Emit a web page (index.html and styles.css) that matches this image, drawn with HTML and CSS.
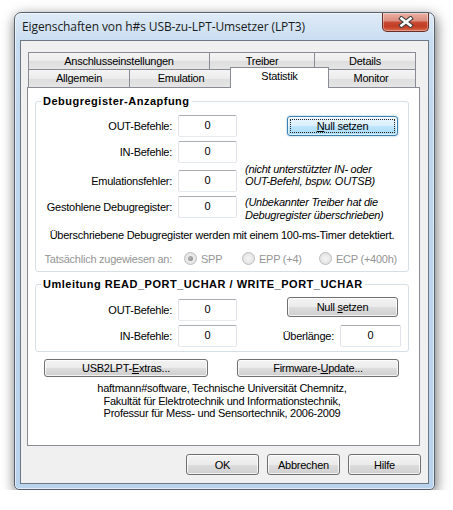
FILE: index.html
```html
<!DOCTYPE html>
<html lang="de">
<head>
<meta charset="utf-8">
<title>Eigenschaften</title>
<link rel="stylesheet" href="styles.css">
</head>
<body>
<div class="window">
  <div class="titlebar">
    <span class="title">Eigenschaften von h#s USB-zu-LPT-Umsetzer (LPT3)</span>
    <div class="close">
      <svg width="16" height="12" viewBox="0 0 16 12">
        <path d="M3.5 2.5 L12.5 9.5 M12.5 2.5 L3.5 9.5" stroke="#3d3d3d" stroke-width="4.6" stroke-linecap="square" fill="none"/>
        <path d="M3.5 2.5 L12.5 9.5 M12.5 2.5 L3.5 9.5" stroke="#ffffff" stroke-width="2.6" stroke-linecap="square" fill="none"/>
      </svg>
    </div>
  </div>
  <div class="client">
    <div class="tabs">
      <div class="tabrow row1">
        <div class="tab w-ansch">Anschlusseinstellungen</div>
        <div class="tab w-treiber">Treiber</div>
        <div class="tab w-details">Details</div>
      </div>
      <div class="tabrow row2">
        <div class="tab w-allg">Allgemein</div>
        <div class="tab w-emu">Emulation</div>
        <div class="tab active w-stat">Statistik</div>
        <div class="tab w-mon">Monitor</div>
      </div>
    </div>
    <div class="panel">
      <div class="group g1">
        <div class="gtitle">Debugregister-Anzapfung</div>
        <div class="frow r1">
          <span class="lbl">OUT-Befehle:</span>
          <span class="edit">0</span>
          <span class="btn focus nullbtn"><span class="focusrect"><span><u>N</u>ull setzen</span></span></span>
        </div>
        <div class="frow r2">
          <span class="lbl">IN-Befehle:</span>
          <span class="edit">0</span>
        </div>
        <div class="frow r3">
          <span class="lbl">Emulationsfehler:</span>
          <span class="edit">0</span>
          <span class="note note1">(nicht unterstützter IN- oder<br>OUT-Befehl, bspw. OUTSB)</span>
        </div>
        <div class="frow r4">
          <span class="lbl">Gestohlene Debugregister:</span>
          <span class="edit">0</span>
          <span class="note note2">(Unbekannter Treiber hat die<br>Debugregister überschrieben)</span>
        </div>
        <div class="info">Überschriebene Debugregister werden mit einem 100-ms-Timer detektiert.</div>
        <div class="radiorow">
          <span class="lbl grey">Tatsächlich zugewiesen an:</span>
          <span class="opt o-spp"><span class="radio checked"></span><span class="grey">SPP</span></span>
          <span class="opt o-epp"><span class="radio"></span><span class="grey">EPP (+4)</span></span>
          <span class="opt o-ecp"><span class="radio"></span><span class="grey">ECP (+400h)</span></span>
        </div>
      </div>
      <div class="group g2">
        <div class="gtitle">Umleitung READ_PORT_UCHAR / WRITE_PORT_UCHAR</div>
        <div class="frow q1">
          <span class="lbl">OUT-Befehle:</span>
          <span class="edit">0</span>
          <span class="btn nullbtn nb2"><span>Null <u>s</u>etzen</span></span>
        </div>
        <div class="frow q2">
          <span class="lbl">IN-Befehle:</span>
          <span class="edit">0</span>
          <span class="lbl2">Überlänge:</span>
          <span class="edit wide">0</span>
        </div>
      </div>
      <div class="extras">
        <span class="btn b-extras"><span>USB2LPT-<u>E</u>xtras...</span></span>
        <span class="btn b-fw"><span>Firmware-<u>U</u>pdate...</span></span>
      </div>
      <div class="credits">haftmann#software, Technische Universität Chemnitz,<br>Fakultät für Elektrotechnik und Informationstechnik,<br>Professur für Mess- und Sensortechnik, 2006-2009</div>
    </div>
    <div class="dlgbtns">
      <span class="btn dbtn">OK</span>
      <span class="btn dbtn">Abbrechen</span>
      <span class="btn dbtn">Hilfe</span>
    </div>
  </div>
</div>
</body>
</html>
```
FILE: styles.css
```css
* { box-sizing: border-box; }
body {
  margin: 0;
  background: #ffffff;
  font-family: "Liberation Sans", Arial, sans-serif;
  font-size: 11px;
  letter-spacing: -0.25px;
  color: #000;
}
.window {
  margin: 12px 0 0 14px;
  width: 421px;
  height: 478px;
  border: 1px solid #56626e;
  border-radius: 7px 7px 5px 5px;
  background: linear-gradient(#dfebf7, #c9ddf1 28px, #bed6ee 120px, #bad3ec);
  box-shadow: 1px 4px 13px rgba(0,0,0,0.6), inset 0 0 0 1px rgba(255,255,255,0.55);
  display: flex;
  flex-direction: column;
}
.titlebar {
  height: 27px;
  display: flex;
  align-items: flex-start;
}
.title {
  font-family: "Open Sans", "Noto Sans", sans-serif;
  font-size: 12px;
  letter-spacing: -0.1px;
  line-height: 28px;
  padding-left: 7px;
  color: #1a1a1a;
}
.close {
  margin-left: auto;
  margin-right: 5px;
  width: 47px;
  height: 19px;
  border: 1px solid #6b2e26;
  border-top: none;
  border-radius: 0 0 5px 5px;
  background: linear-gradient(#eab2a5, #dc8b7c 45%, #c94a33 50%, #c33d24 75%, #d76a4c);
  box-shadow: inset 0 0 0 1px rgba(255,255,255,0.35);
  display: flex;
  align-items: center;
  justify-content: center;
}
.close svg { display: block; }
.client {
  margin: 0 5px;
  height: 444px;
  border: 1px solid #6c7884;
  background: #f0f0f0;
  display: flex;
  flex-direction: column;
}
.tabs { margin: 11px 0 0 7px; }
.tabrow { display: flex; }
.tab {
  border: 1px solid #898c95;
  border-bottom: none;
  margin-left: -1px;
  background: linear-gradient(#f4f4f4, #ececec 50%, #dedede 51%, #e5e5e5);
  text-align: center;
  white-space: nowrap;
}
.tabrow .tab:first-child { margin-left: 0; }
.row1 .tab { height: 17px; line-height: 16px; }
.row2 .tab { height: 18px; line-height: 17px; }
.w-ansch { width: 182px; }
.w-treiber { width: 106px; }
.w-details { width: 102px; }
.w-allg { width: 102px; }
.w-emu { width: 104px; }
.w-mon { width: 90px; }
.row2 .tab.active {
  width: 99px;
  height: 21px;
  margin: -2px -2px -1px -3px;
  background: #ffffff;
  line-height: 17px;
  position: relative;
  z-index: 2;
}
.panel {
  margin-left: 6px;
  width: 393px;
  height: 359px;
  border: 1px solid #898c95;
  background: #ffffff;
  display: flex;
  flex-direction: column;
}
.group {
  margin-left: 7px;
  width: 374px;
  border: 1px solid #d5dfe5;
  border-radius: 3px;
}
.g1 { margin-top: 13px; padding-bottom: 6px; }
.g2 { margin-top: 12px; padding-bottom: 4px; }
.gtitle {
  font-weight: bold;
  letter-spacing: 0.5px;
  margin: -7px 0 0 5px;
  padding: 0 2px;
  background: #fff;
  line-height: 13px;
  width: fit-content;
}
.frow {
  display: flex;
  align-items: center;
  height: 22px;
}
.lbl {
  width: 136px;
  text-align: right;
  white-space: nowrap;
  flex: none;
}
.edit {
  margin-left: 6px;
  width: 59px;
  height: 22px;
  border: 1px solid #e2e3ea;
  border-top-color: #abadb3;
  border-bottom-color: #e3e9ef;
  border-radius: 2px;
  background: #fff;
  text-align: center;
  line-height: 18px;
  flex: none;
}
.edit.wide { width: 61px; margin: 0 7px 0 6px; }
.r1 { margin-top: 7px; }
.r2 { margin-top: 4px; }
.r3 { margin-top: 7px; }
.r4 { margin-top: 4px; }
.q1 { margin-top: 8px; }
.q2 { margin-top: 4px; }
.btn {
  border: 1px solid #707070;
  border-radius: 3px;
  background: linear-gradient(#f3f3f3, #ebebeb 50%, #dddddd 51%, #cfcfcf);
  box-shadow: inset 0 0 0 1px rgba(255,255,255,0.75);
  display: flex;
  align-items: center;
  justify-content: center;
  white-space: nowrap;
  flex: none;
}
.nullbtn {
  margin-left: 50px;
  width: 111px;
  height: 20px;
}
.nb2 { align-self: flex-start; margin-top: -2px; }
.btn.focus {
  border-color: #3c7fb1;
  background: linear-gradient(#eaf6fd, #d9f0fc 50%, #bee6fd 51%, #a7d9f5);
  box-shadow: inset 0 0 0 1px rgba(255,255,255,0.6), 0 0 2px rgba(60,127,177,0.6);
  padding: 2px;
}
.focusrect {
  width: 100%;
  height: 100%;
  border: 1px dotted #222;
  display: flex;
  align-items: center;
  justify-content: center;
}
.note {
  margin-left: 8px;
  font-style: italic;
  line-height: 12px;
  white-space: nowrap;
  align-self: flex-start;
}
.note1 { margin-top: -7px; }
.note2 { margin-top: 0; line-height: 12.5px; }
.info {
  margin-top: 11px;
  line-height: 13px;
  text-align: center;
}
.radiorow {
  margin-top: 10px;
  height: 13px;
  display: flex;
  align-items: center;
}
.grey { color: #959595; }
.opt {
  display: flex;
  align-items: center;
  flex: none;
}
.o-spp { margin-left: 12px; width: 58px; }
.o-epp { width: 77px; }
.radio {
  width: 13px;
  height: 13px;
  border-radius: 50%;
  border: 1px solid #bcbcbc;
  background: radial-gradient(circle at 50% 50%, #f4f4f4 0, #e6e6e6 60%, #dadada 100%);
  margin-right: 4px;
  display: flex;
  align-items: center;
  justify-content: center;
  flex: none;
}
.radio.checked::after {
  content: "";
  width: 5px;
  height: 5px;
  border-radius: 50%;
  background: radial-gradient(circle at 40% 40%, #b8b8b8, #7e7e7e);
}
.lbl2 {
  margin-left: auto;
  white-space: nowrap;
}
.extras {
  margin: 7px 0 0 16px;
  display: flex;
}
.b-extras { width: 164px; height: 18px; }
.b-fw { width: 162px; height: 18px; margin-left: 29px; }
.credits {
  margin: 5px 0 0 7px;
  width: 374px;
  text-align: center;
  line-height: 12.5px;
}
.dlgbtns {
  margin-top: 8px;
  padding-right: 7px;
  display: flex;
  justify-content: flex-end;
  gap: 8px;
}
.dbtn { width: 73px; height: 21px; }
```
